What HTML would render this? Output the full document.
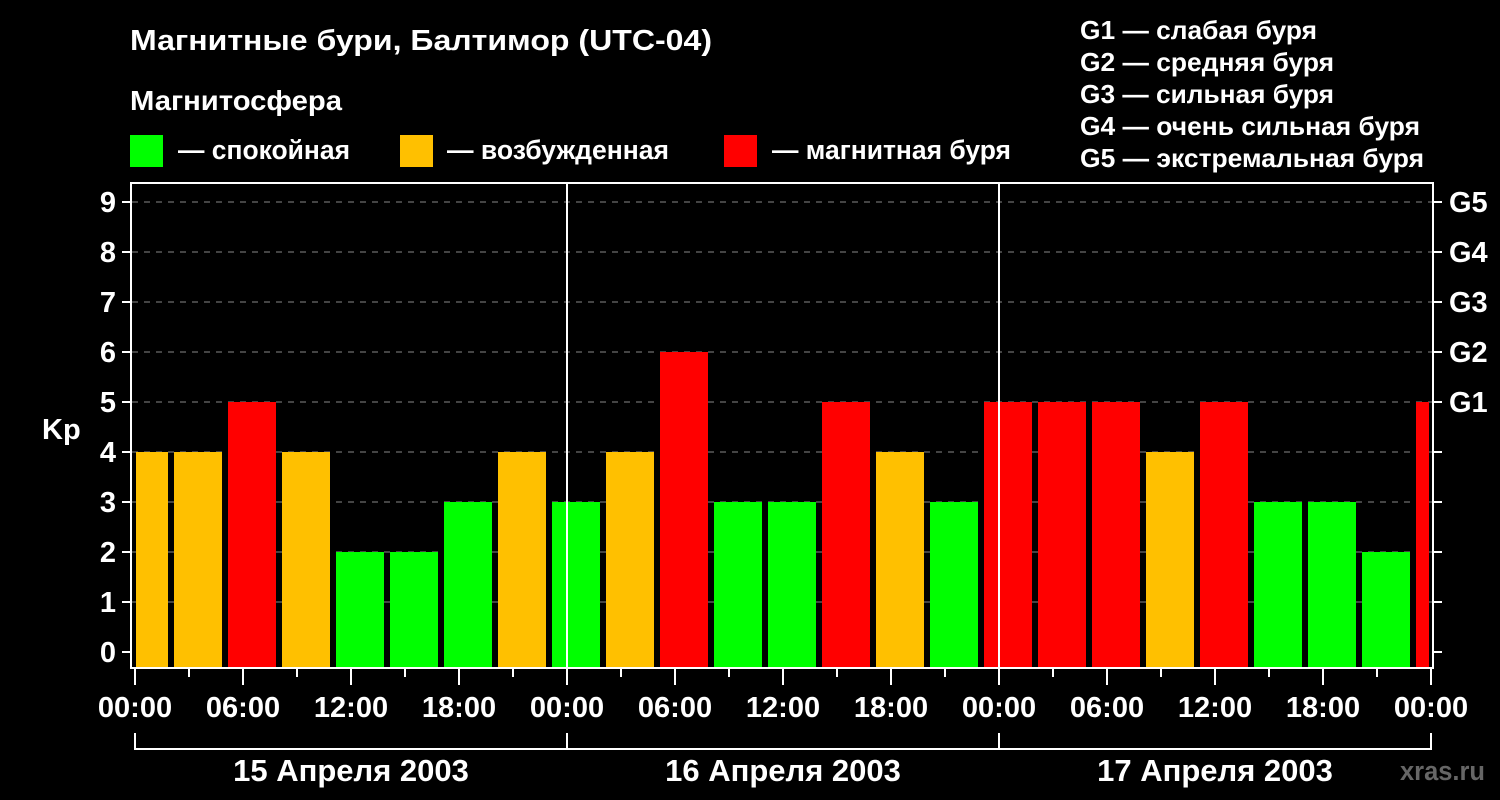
<!DOCTYPE html>
<html><head><meta charset="utf-8"><style>html,body{margin:0;padding:0;background:#000}svg{display:block}</style></head><body>
<svg width="1500" height="800" xmlns="http://www.w3.org/2000/svg" font-family="Liberation Sans, Arial, sans-serif" font-weight="bold" fill="#fff">
<rect width="1500" height="800" fill="#000"/>
<text x="130" y="50" font-size="29" textLength="582" lengthAdjust="spacingAndGlyphs">Магнитные бури, Балтимор (UTC-04)</text>
<text x="130" y="110" font-size="28" textLength="212" lengthAdjust="spacingAndGlyphs">Магнитосфера</text>
<rect x="130" y="135" width="33" height="32" fill="#00ff00"/>
<text x="178" y="159" font-size="27" textLength="172" lengthAdjust="spacingAndGlyphs">— спокойная</text>
<rect x="400" y="135" width="33" height="32" fill="#ffc000"/>
<text x="447" y="159" font-size="27" textLength="222" lengthAdjust="spacingAndGlyphs">— возбужденная</text>
<rect x="724" y="135" width="33" height="32" fill="#ff0000"/>
<text x="772" y="159" font-size="27" textLength="239" lengthAdjust="spacingAndGlyphs">— магнитная буря</text>
<g font-size="26">
<text x="1080" y="39" textLength="237" lengthAdjust="spacingAndGlyphs">G1 — слабая буря</text>
<text x="1080" y="71" textLength="254" lengthAdjust="spacingAndGlyphs">G2 — средняя буря</text>
<text x="1080" y="103" textLength="254" lengthAdjust="spacingAndGlyphs">G3 — сильная буря</text>
<text x="1080" y="135" textLength="340" lengthAdjust="spacingAndGlyphs">G4 — очень сильная буря</text>
<text x="1080" y="167" textLength="344" lengthAdjust="spacingAndGlyphs">G5 — экстремальная буря</text>
</g>
<g stroke="#888" stroke-width="1" stroke-dasharray="6,6">
<line x1="132" y1="202" x2="1432" y2="202"/><line x1="132" y1="252" x2="1432" y2="252"/>
<line x1="132" y1="302" x2="1432" y2="302"/><line x1="132" y1="352" x2="1432" y2="352"/>
<line x1="132" y1="402" x2="1432" y2="402"/><line x1="132" y1="452" x2="1432" y2="452"/>
<line x1="132" y1="502" x2="1432" y2="502"/><line x1="132" y1="552" x2="1432" y2="552"/>
<line x1="132" y1="602" x2="1432" y2="602"/>
</g>
<g>
<rect x="136" y="452" width="32" height="216" fill="#ffc000"/>
<rect x="174" y="452" width="48" height="216" fill="#ffc000"/>
<rect x="228" y="402" width="48" height="266" fill="#ff0000"/>
<rect x="282" y="452" width="48" height="216" fill="#ffc000"/>
<rect x="336" y="552" width="48" height="116" fill="#00ff00"/>
<rect x="390" y="552" width="48" height="116" fill="#00ff00"/>
<rect x="444" y="502" width="48" height="166" fill="#00ff00"/>
<rect x="498" y="452" width="48" height="216" fill="#ffc000"/>
<rect x="552" y="502" width="48" height="166" fill="#00ff00"/>
<rect x="606" y="452" width="48" height="216" fill="#ffc000"/>
<rect x="660" y="352" width="48" height="316" fill="#ff0000"/>
<rect x="714" y="502" width="48" height="166" fill="#00ff00"/>
<rect x="768" y="502" width="48" height="166" fill="#00ff00"/>
<rect x="822" y="402" width="48" height="266" fill="#ff0000"/>
<rect x="876" y="452" width="48" height="216" fill="#ffc000"/>
<rect x="930" y="502" width="48" height="166" fill="#00ff00"/>
<rect x="984" y="402" width="48" height="266" fill="#ff0000"/>
<rect x="1038" y="402" width="48" height="266" fill="#ff0000"/>
<rect x="1092" y="402" width="48" height="266" fill="#ff0000"/>
<rect x="1146" y="452" width="48" height="216" fill="#ffc000"/>
<rect x="1200" y="402" width="48" height="266" fill="#ff0000"/>
<rect x="1254" y="502" width="48" height="166" fill="#00ff00"/>
<rect x="1308" y="502" width="48" height="166" fill="#00ff00"/>
<rect x="1362" y="552" width="48" height="116" fill="#00ff00"/>
<rect x="1416" y="402" width="13" height="266" fill="#ff0000"/>
</g>
<g stroke="#fff" stroke-width="2" fill="none">
<rect x="131" y="183" width="1302" height="485"/>
<line x1="567" y1="183" x2="567" y2="668"/>
<line x1="999" y1="183" x2="999" y2="668"/>
<path d="M122 202H131M122 252H131M122 302H131M122 352H131M122 402H131M122 452H131M122 502H131M122 552H131M122 602H131M122 652H131"/>
<path d="M1433 202H1442M1433 252H1442M1433 302H1442M1433 352H1442M1433 402H1442M1433 452H1442M1433 502H1442M1433 552H1442M1433 602H1442M1433 652H1442"/>
<path d="M135 668V685M243 668V685M351 668V685M459 668V685M567 668V685M675 668V685M783 668V685M891 668V685M999 668V685M1107 668V685M1215 668V685M1323 668V685M1431 668V685"/>
<path d="M189 668V677M297 668V677M405 668V677M513 668V677M621 668V677M729 668V677M837 668V677M945 668V677M1053 668V677M1161 668V677M1269 668V677M1377 668V677"/>
<path d="M135 733V749H1431V733M567 733V749M999 733V749"/>
</g>
<g font-size="29" text-anchor="end">
<text x="116" y="212">9</text><text x="116" y="262">8</text><text x="116" y="312">7</text>
<text x="116" y="362">6</text><text x="116" y="412">5</text><text x="116" y="462">4</text>
<text x="116" y="512">3</text><text x="116" y="562">2</text><text x="116" y="612">1</text>
<text x="116" y="662">0</text>
</g>
<text x="42" y="439" font-size="29">Kp</text>
<g font-size="29">
<text x="1449" y="212">G5</text><text x="1449" y="262">G4</text><text x="1449" y="312">G3</text>
<text x="1449" y="362">G2</text><text x="1449" y="412">G1</text>
</g>
<g font-size="29" text-anchor="middle">
<text x="135" y="717">00:00</text><text x="243" y="717">06:00</text><text x="351" y="717">12:00</text><text x="459" y="717">18:00</text>
<text x="567" y="717">00:00</text><text x="675" y="717">06:00</text><text x="783" y="717">12:00</text><text x="891" y="717">18:00</text>
<text x="999" y="717">00:00</text><text x="1107" y="717">06:00</text><text x="1215" y="717">12:00</text><text x="1323" y="717">18:00</text>
<text x="1431" y="717">00:00</text>
<text x="351" y="781" font-size="31">15 Апреля 2003</text>
<text x="783" y="781" font-size="31">16 Апреля 2003</text>
<text x="1215" y="781" font-size="31">17 Апреля 2003</text>
</g>
<text x="1400" y="780" font-size="27" fill="#666" textLength="85" lengthAdjust="spacingAndGlyphs">xras.ru</text>
</svg>
</body></html>
